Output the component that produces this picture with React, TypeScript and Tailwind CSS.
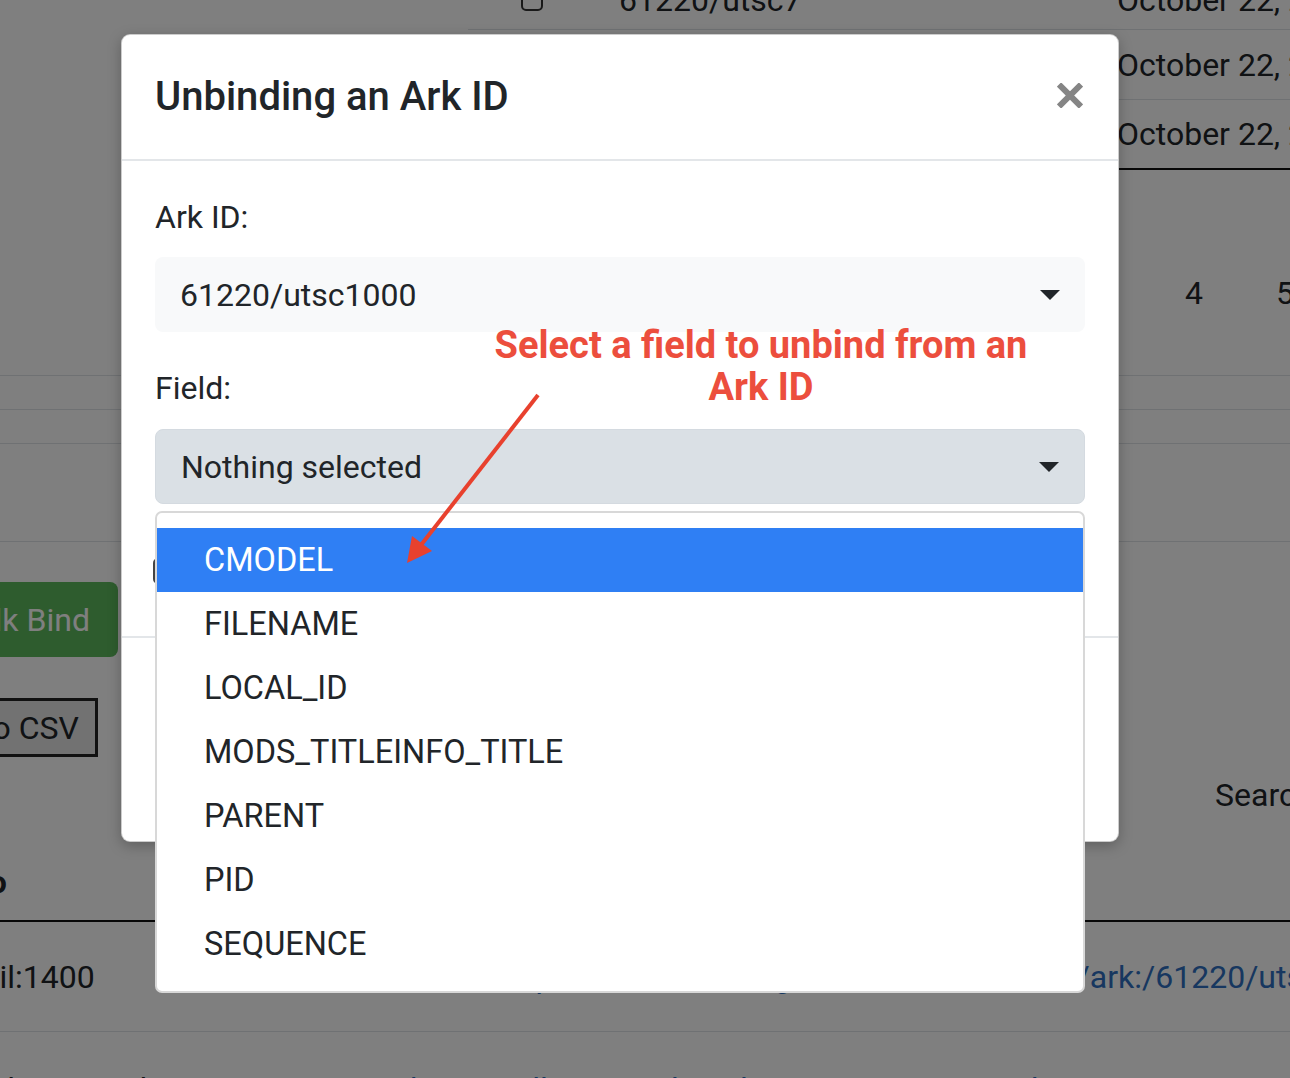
import { useState } from "react";

const fields = ["CMODEL", "FILENAME", "LOCAL_ID", "MODS_TITLEINFO_TITLE", "PARENT", "PID", "SEQUENCE"];

const link = "http://collections.digital.utsc.utoronto.ca/ark:/61220/";

function Caret() {
    return <span className="h-0 w-0 border-x-[10px] border-t-[10px] border-x-transparent border-t-[#212529]" />;
}

// the listing page that sits behind the backdrop
function BackPage() {
    return (
        <div className="w-[2200px] whitespace-nowrap text-[32px] leading-[48px]">

            <div className="-mt-[30px] ml-[468px]">
                {["7", "8", "9"].map((n, i) => (
                    <div
                        key={n}
                        className={`flex ${i === 0 ? "h-[60px] border-b border-[#dee2e6]" : i === 1 ? "h-[70px] border-b border-[#dee2e6]" : "h-[70px] border-b-2 border-[#111]"}`}>
                        <div className="flex w-[130px] items-center pl-[53px]">
                            <span className="h-[22px] w-[22px] rounded-[5px] border-2 border-[#333]" />
                        </div>
                        <div className="flex w-[497px] items-center pl-[21px]">61220/utsc{n}</div>
                        <div className="flex items-center pl-[22px]">October 22, 2020</div>
                    </div>
                ))}
            </div>

            <div className="h-[206px] border-b border-[#dee2e6] pt-[99px]">
                <div className="flex gap-[73px] pl-[912px]">
                    {[1, 2, 3, 4, 5].map(n => <span key={n}>{n}</span>)}
                </div>
            </div>
            <div className="h-[34px] border-b border-[#dee2e6]" />
            <div className="h-[34px] border-b border-[#dee2e6]" />
            <div className="h-[98px] border-b border-[#dee2e6]" />

            <div className="pt-[40px]">
                <div className="-ml-[69px] inline-flex h-[75px] items-center rounded-[8px] bg-[#5cb85c] pl-[26px] pr-[28px] text-white">
                    Bulk Bind
                </div>
            </div>
            <div className="mt-[41px]">
                <div className="-ml-[137px] inline-flex h-[59px] items-center border-[3px] border-[#222] bg-[#e4e4e4] px-[16px]">
                    Export to CSV
                </div>
            </div>
            <div className="mt-[14px] pl-[1215px]">Search:</div>

            <div className="flex h-[103px] items-end border-b-2 border-[#111] pb-[14px] font-bold">
                <span className="-ml-[50px]">Info</span>
            </div>

            <div className="flex h-[110px] items-center border-b border-[#dee2e6]">
                <div className="-ml-[46px] w-[543px]">mail:1400</div>
                <div className="text-[#2f6fc0]">{link}utsc1400</div>
            </div>
            <div className="flex h-[110px] items-start pt-[33px]">
                <div className="-ml-[46px] w-[456px]">mail:1401 Title page</div>
                <div className="text-[#2f6fc0]">{link}utsc1401 view record</div>
            </div>
        </div>
    );
}

function FieldSelect() {
    const [active] = useState("CMODEL");

    return (
        <div className="relative">
            <div className="flex h-[75px] items-center justify-between rounded-[8px] border border-[#d4dae0] bg-[#dae0e5] pl-[25px] pr-[25px]">
                <span>Nothing selected</span>
                <Caret />
            </div>

            <ul className="absolute left-0 right-0 top-full z-10 mt-[7px] rounded-[7px] border-2 border-[#d8d8d8] bg-white py-[15px] text-[32.5px]">
                {fields.map(f => (
                    <li
                        key={f}
                        className={`flex h-[64px] items-center pl-[47px] ${f === active ? "bg-[#2f7ff4] text-white" : "text-[#212529]"}`}>
                        {f}
                    </li>
                ))}
            </ul>
        </div>
    );
}

function UnbindModal() {
    return (
        <div className="absolute left-[121px] top-[34px] flex h-[808px] w-[998px] flex-col rounded-[9px] border border-black/20 bg-white text-[32px] leading-[48px] shadow-[0_4px_14px_rgba(0,0,0,0.25)]">

            <div className="flex h-[126px] items-start justify-between border-b-2 border-[#e3e6e9] pl-[33px] pr-[35px] pt-[38px]">
                <h5 className="text-[40px] font-medium leading-[48px]">Unbinding an Ark ID</h5>
                <button className="mt-[10px]" aria-label="Close">
                    <svg width="26" height="25" viewBox="0 0 26 25">
                        <path d="M2 1.5 L24 23.5 M24 1.5 L2 23.5" stroke="#858585" strokeWidth="6" />
                    </svg>
                </button>
            </div>

            <div className="flex h-[475px] flex-col px-[33px] pt-[32px]">
                <label className="mb-[16px]">Ark ID:</label>
                <div className="flex h-[75px] items-center justify-between rounded-[8px] bg-[#f8f9fa] pl-[25px] pr-[25px]">
                    <span>61220/utsc1000</span>
                    <Caret />
                </div>

                <label className="mb-[17px] mt-[32px]">Field:</label>
                <FieldSelect />

                <div className="mt-[43px] flex items-center gap-4">
                    <span className="-ml-[2px] h-[26px] w-[26px] rounded-[5px] border-2 border-[#444]" />
                    <span>Unbind all</span>
                </div>
            </div>

            <div className="flex flex-1 items-start justify-end gap-4 border-t-2 border-[#e3e6e9] pr-[33px] pt-[26px]">
                <button className="rounded-[8px] bg-[#6c757d] px-6 py-3 text-white">Close</button>
                <button className="rounded-[8px] bg-[#dc3545] px-6 py-3 text-white">Unbind</button>
            </div>
        </div>
    );
}

// red help text and arrow drawn over the screenshot
function Annotation() {
    return (
        <div className="pointer-events-none absolute inset-0 z-20">
            <div className="absolute left-[470px] top-[324px] w-[582px] text-center text-[38px] font-bold leading-[42px] text-[#ec4e3d]">
                <div className="whitespace-nowrap">Select a field to unbind from an</div>
                <div className="whitespace-nowrap">Ark ID</div>
            </div>
            <svg className="absolute left-0 top-0" width="1290" height="1078" viewBox="0 0 1290 1078">
                <line x1="538" y1="395" x2="421" y2="545" stroke="#e8412e" strokeWidth="4" />
                <polygon points="407,563 412,536 432,551" fill="#e8412e" />
            </svg>
        </div>
    );
}

export default function App() {
    return (
        <div className="relative h-[1078px] w-full overflow-hidden bg-white font-['Roboto',sans-serif] text-[#212529]">
            <BackPage />
            <div className="absolute inset-0 bg-black/50" />
            <UnbindModal />
            <Annotation />
        </div>
    );
}
